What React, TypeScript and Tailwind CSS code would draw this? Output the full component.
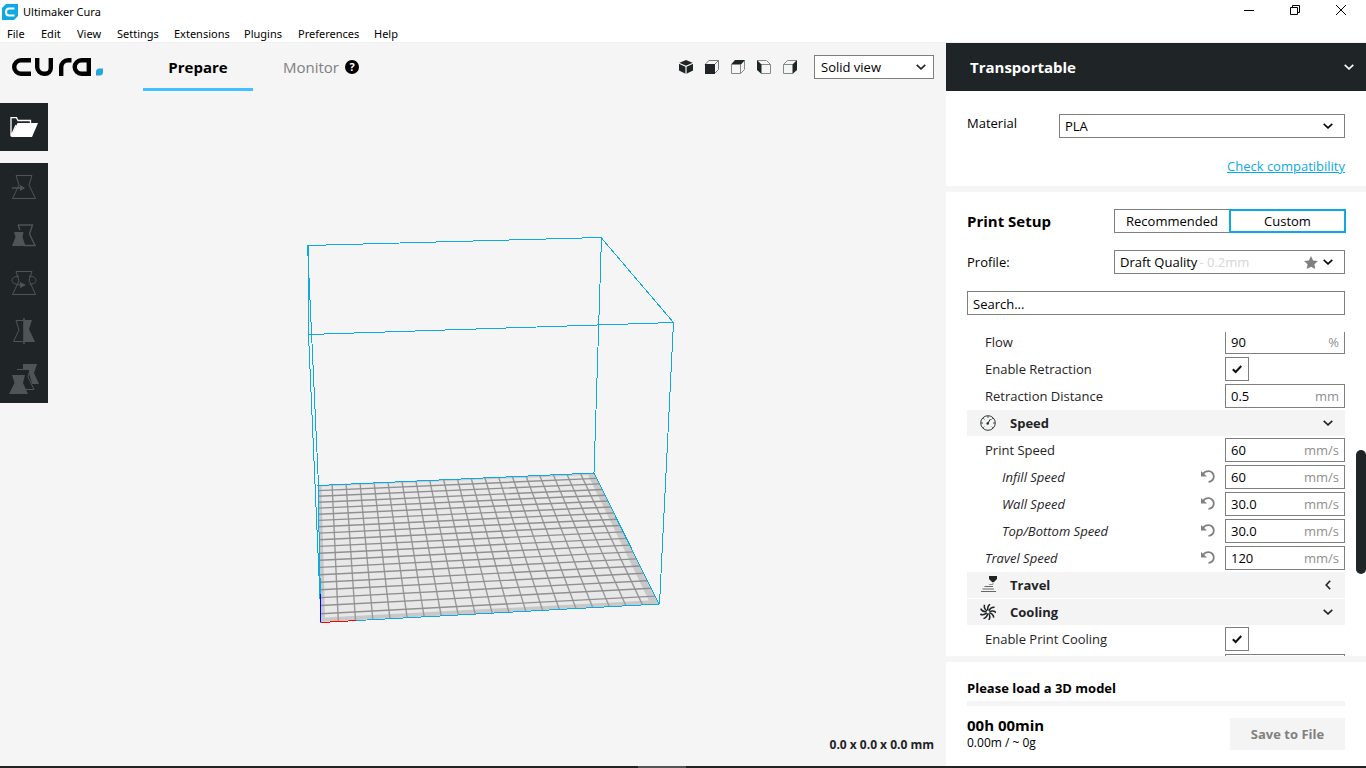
import React, { useState } from 'react';

const MENU = [
  { label: 'File', width: 'w-[34px]' },
  { label: 'Edit', width: 'w-[36px]' },
  { label: 'View', width: 'w-[40px]' },
  { label: 'Settings', width: 'w-[57px]' },
  { label: 'Extensions', width: 'w-[70px]' },
  { label: 'Plugins', width: 'w-[54px]' },
  { label: 'Preferences', width: 'w-[76px]' },
  { label: 'Help', width: 'w-[40px]' }
];

type Point = [number, number];

// Corners of the build plate: back left, back right, front right, front left
const PLATE: Point[] = [
  [318, 485],
  [594, 473],
  [659, 604],
  [321, 622]
];

// Projects (u, v) of the unit square onto the plate in perspective
const project = (u: number, v: number): Point => {
  const [[x0, y0], [x1, y1], [x2, y2], [x3, y3]] = PLATE;
  const dx1 = x1 - x2;
  const dx2 = x3 - x2;
  const dx3 = x0 - x1 + x2 - x3;
  const dy1 = y1 - y2;
  const dy2 = y3 - y2;
  const dy3 = y0 - y1 + y2 - y3;
  const det = dx1 * dy2 - dx2 * dy1;
  const g = (dx3 * dy2 - dx2 * dy3) / det;
  const h = (dx1 * dy3 - dx3 * dy1) / det;
  const w = g * u + h * v + 1;
  return [
    ((x1 - x0 + g * x1) * u + (x3 - x0 + h * x3) * v + x0) / w,
    ((y1 - y0 + g * y1) * u + (y3 - y0 + h * y3) * v + y0) / w
  ];
};

const segment = (a: Point, b: Point) =>
  `M${a[0].toFixed(1)} ${a[1].toFixed(1)}L${b[0].toFixed(1)} ${b[1].toFixed(1)}`;

const steps = Array.from({ length: 19 }, (_, i) => (i + 1) / 20);
const columns = steps.map((s) => segment(project(s, 0), project(s, 1))).join('');
const rows = steps.map((s) => segment(project(0, s), project(1, s))).join('');
const inner = [
  project(0.012, 0.015),
  project(0.975, 0.015),
  project(0.975, 0.975),
  project(0.012, 0.975)
]
  .map((p) => p.join(','))
  .join(' ');

const BuildVolume = () => (
  <svg
    width="380"
    height="400"
    viewBox="300 230 380 400"
    fill="none"
    aria-hidden="true"
  >
    <polygon points={PLATE.map((p) => p.join(',')).join(' ')} fill="#c8c8c8" />
    <polygon points={inner} fill="#e8e8e8" />
    <path d={columns} stroke="#999" strokeWidth="1.4" />
    <path d={rows} stroke="#909090" strokeWidth="1.4" />
    <g stroke="#0ca9e3" shapeRendering="crispEdges">
      <path d="M308 245.5L601 237.5L673.5 322.5L308.5 334.5Z" />
      <path d="M318 485.5L594 473L659 604L321 622.5Z" />
      <path d="M307.5 245L318.5 485M308.5 334L321 622M601.5 237L594 473M673.5 322L659.5 604" />
    </g>
    <path d="M320.5 594V622" stroke="#0000ff" shapeRendering="crispEdges" />
    <path d="M321 622.5L356 620.6" stroke="#ff0000" shapeRendering="crispEdges" />
  </svg>
);

const Chevron = ({ className = '' }: { className?: string }) => (
  <svg width="10" height="6" viewBox="0 0 10 6" fill="none" className={className} aria-hidden="true">
    <path d="M.7 .8L5 4.8L9.3 .8" stroke="currentColor" strokeWidth="1.6" />
  </svg>
);

const AppIcon = () => (
  <svg width="16" height="16" viewBox="0 0 16 16" aria-hidden="true">
    <path d="M4 0H16V12L12 16H0V4Z" fill="#0ca9e3" />
    <path d="M12.5 4.5H7Q4 4.5 4 8T7 11.5H12.5" fill="none" stroke="#fff" strokeWidth="2" />
  </svg>
);

const CuraLogo = () => (
  <svg width="92" height="20" viewBox="0 0 92 20" fill="none" role="img" aria-label="cura.">
    <g stroke="#000" strokeWidth="4.4">
      <path d="M19 3.2H9A6.8 6.8 0 0 0 9 16.8H19" />
      <path d="M25.2 1V10A6.8 6.8 0 0 0 32 16.8H33A5.8 5.8 0 0 0 38.8 11V1" />
      <path d="M49.2 19V10A6.8 6.8 0 0 1 56 3.2H59.5" />
      <path d="M76.8 19V3.2H69.5A6.8 6.8 0 0 0 69.5 16.8H76.8" />
    </g>
    <path d="M84 18.5V15Q84 11.5 87.5 11.5H91V15Q91 18.5 87.5 18.5Z" fill="#22a7e0" />
  </svg>
);

// Cube icons for the camera presets, each with its own visible face filled in
const VIEWS = [
  {
    label: '3D View',
    art: (
      <>
        <path d="M8 1L15 4V11.5L8 15L1 11.5V4Z" fill="#1f2427" />
        <path d="M1 4.3L8 7.3L15 4.3M8 7.3V15" stroke="#f4f4f4" strokeWidth="1.2" />
      </>
    )
  },
  {
    label: 'Front View',
    art: (
      <>
        <path d="M1 5.5L5 1.5H14.5V10.5L10.5 14.5M10.5 5.5L14.5 1.5" stroke="#777" />
        <path d="M1 5H11V15H1Z" fill="#1f2427" />
      </>
    )
  },
  {
    label: 'Top View',
    art: (
      <>
        <path d="M1.5 5.5V14.5H10.5V5.5M10.5 14.5L14.5 10.5V1.5" stroke="#888" />
        <path d="M1 5.5L5 1H15L11 5.5Z" fill="#1f2427" />
      </>
    )
  },
  {
    label: 'Left View',
    art: (
      <>
        <path d="M5.5 5.5H14.5V14.5H5.5M1.5 1.5H10.5L14.5 5.5" stroke="#888" />
        <path d="M1 1L5.5 5.5V15L1 11Z" fill="#1f2427" />
      </>
    )
  },
  {
    label: 'Right View',
    art: (
      <>
        <path d="M10.5 5.5H1.5V14.5H10.5M1.5 5.5L5.5 1.5H14.5" stroke="#888" />
        <path d="M10.5 5.5L15 1V11L10.5 15Z" fill="#1f2427" />
      </>
    )
  }
];

const TOOLS = [
  {
    label: 'Move',
    art: (
      <>
        <path d="M5 1.5H21L18 11L24.5 24.5H1.5L8 11Z" />
        <path d="M1 14H10" strokeWidth="1.5" />
        <path d="M9 11L14 14L9 17Z" fill="#4f5456" stroke="none" />
      </>
    )
  },
  {
    label: 'Scale',
    art: (
      <>
        <path d="M7 3H21.5L18.5 12L24 23.5H13M7 3L9 8" strokeWidth="1.4" />
        <path d="M3 10H12.5L11.5 15L14.5 24H1L4.5 15Z" fill="#4f5456" stroke="none" />
      </>
    )
  },
  {
    label: 'Rotate',
    art: (
      <>
        <path d="M5 1.5H21L18 10L24.5 24.5H1.5L8 11Z" />
        <path d="M8 6C3 6.5 1 8 1 10.5S3 14 9 15M18 6C23 6.5 25 8 25 10.5S22 14 18.5 14.5" />
        <path d="M9 12L15 15L9 18Z" fill="#4f5456" stroke="none" />
      </>
    )
  },
  {
    label: 'Mirror',
    art: (
      <>
        <path d="M12 2.5H5L8 12L2.5 23.5H12" />
        <path d="M13 2H21L18 11L24 24H13Z" fill="#4f5456" stroke="none" />
        <path d="M13 0V26" strokeWidth="1.6" />
      </>
    )
  },
  {
    label: 'Per Model Settings',
    art: (
      <>
        <path d="M12 -2H26L23 7L28 18H21L18 7L12 5Z" fill="#4f5456" stroke="none" />
        <path d="M6 3.5H19L17 11L23 23.5H14" fill="#1f2427" />
        <path d="M1 9H14L12 17L17 28H-2L3.5 17Z" fill="#4f5456" stroke="none" />
      </>
    )
  }
];

const SpeedIcon = () => (
  <svg width="16" height="16" viewBox="0 0 16 16" fill="none" stroke="#1f2427" aria-hidden="true">
    <circle cx="8" cy="8" r="7.3" strokeWidth="0.9" />
    <path
      d="M8 1V3M1 8H3M13 8H15M3.2 3.2L4.5 4.5M12.8 3.2L11.5 4.5M3.2 12.8L4.3 11.7M12.8 12.8L11.7 11.7"
      strokeWidth="0.8"
    />
    <path d="M10.5 4L8 8" />
    <circle cx="7.7" cy="8.5" r="1.2" fill="#1f2427" stroke="none" />
  </svg>
);

const TravelIcon = () => (
  <svg width="17" height="18" viewBox="0 0 17 18" fill="none" aria-hidden="true">
    <path d="M9 0H17V3L14 6H12L9 3Z" fill="#1f2427" />
    <path d="M13 6V8.5H9" stroke="#999" />
    <path d="M4.5 10.5H13M2.5 13H14M1 15.5H16" stroke="#666" />
  </svg>
);

const CoolingIcon = () => (
  <svg width="16" height="16" viewBox="0 0 16 16" fill="none" stroke="#1f2427" strokeWidth="1.5" aria-hidden="true">
    {[0, 40, 80, 120, 160, 200, 240, 280, 320].map((angle) => (
      <path key={angle} d="M8 6.5Q6.8 2.5 10 .2" transform={`rotate(${angle} 8 8)`} />
    ))}
  </svg>
);

const ResetIcon = () => (
  <svg width="14" height="13" viewBox="0 0 14 13" fill="none" aria-hidden="true">
    <path d="M2 4Q4 1.2 7.5 1.2A5.2 5.2 0 0 1 7.5 11.8" stroke="#808080" strokeWidth="1.8" />
    <path d="M0 1V6.5H6Z" fill="#808080" />
  </svg>
);

type Row =
  | { kind: 'value'; label: string; value: string; unit: string; child?: boolean; changed?: boolean }
  | { kind: 'check'; label: string }
  | { kind: 'category'; label: string; icon: React.ReactNode; open: boolean };

const SETTINGS: Row[] = [
  { kind: 'value', label: 'Flow', value: '90', unit: '%' },
  { kind: 'check', label: 'Enable Retraction' },
  { kind: 'value', label: 'Retraction Distance', value: '0.5', unit: 'mm' },
  { kind: 'category', label: 'Speed', icon: <SpeedIcon />, open: true },
  { kind: 'value', label: 'Print Speed', value: '60', unit: 'mm/s' },
  { kind: 'value', label: 'Infill Speed', value: '60', unit: 'mm/s', child: true, changed: true },
  { kind: 'value', label: 'Wall Speed', value: '30.0', unit: 'mm/s', child: true, changed: true },
  { kind: 'value', label: 'Top/Bottom Speed', value: '30.0', unit: 'mm/s', child: true, changed: true },
  { kind: 'value', label: 'Travel Speed', value: '120', unit: 'mm/s', changed: true },
  { kind: 'category', label: 'Travel', icon: <TravelIcon />, open: false },
  { kind: 'category', label: 'Cooling', icon: <CoolingIcon />, open: true },
  { kind: 'check', label: 'Enable Print Cooling' },
  { kind: 'value', label: '', value: '', unit: '' }
];

const SettingRow = ({ row, id }: { row: Row; id: string }) => {
  if (row.kind === 'category') {
    return (
      <button
        aria-expanded={row.open}
        className="mt-px flex h-[26px] w-full shrink-0 items-center bg-[#f4f4f4] px-3 text-left font-bold"
      >
        <span className="flex w-[31px] items-center pl-px">{row.icon}</span>
        <span className="flex-1">{row.label}</span>
        <Chevron className={row.open ? '' : 'rotate-90'} />
      </button>
    );
  }

  if (row.kind === 'check') {
    return (
      <div className="flex h-[27px] shrink-0 items-center justify-between pl-[18px]">
        <label htmlFor={id}>{row.label}</label>
        <span className="relative mr-24 flex size-6">
          <input
            id={id}
            type="checkbox"
            defaultChecked
            className="peer size-6 appearance-none border border-[#7f7f7f] bg-white"
          />
          <svg
            width="10"
            height="9"
            viewBox="0 0 10 9"
            fill="none"
            className="pointer-events-none absolute top-2 left-[7px] hidden peer-checked:block"
            aria-hidden="true"
          >
            <path d="M.8 4.3L3.6 7L9.3 1" stroke="#111" strokeWidth="2" />
          </svg>
        </span>
      </div>
    );
  }

  return (
    <div className={`flex h-[27px] shrink-0 items-center ${row.child ? 'pl-[35px]' : 'pl-[18px]'}`}>
      <label htmlFor={id} className={`flex-1 ${row.changed ? 'italic' : ''}`}>
        {row.label}
      </label>
      {row.changed && (
        <button aria-label={`Reset ${row.label}`} className="mr-2.5">
          <ResetIcon />
        </button>
      )}
      <div className="flex h-6 w-[120px] items-center border border-[#7f7f7f] bg-white px-[5px]">
        <input
          id={id}
          aria-label={row.label || 'Fan Speed'}
          defaultValue={row.value}
          className="w-full min-w-0 flex-1 bg-transparent text-black outline-none"
        />
        <span className="text-[#8f8f8f]">{row.unit}</span>
      </div>
    </div>
  );
};

const TitleBar = () => (
  <header className="bg-white font-['Noto_Sans','Open_Sans',sans-serif] text-[11px] text-black">
    <div className="flex h-6 justify-between pl-0.5">
      <div className="flex items-center gap-[5px]">
        <AppIcon />
        <span>Ultimaker Cura</span>
      </div>
      <div className="flex pr-0.5">
        <button aria-label="Minimize" className="flex h-5 w-[46px] items-center justify-center">
          <svg width="10" height="10" fill="none" stroke="#000"><path d="M0 5.5H10" /></svg>
        </button>
        <button aria-label="Restore" className="flex h-5 w-[46px] items-center justify-center">
          <svg width="10" height="10" fill="none" stroke="#000"><path d="M.5 2.5H7.5V9.5H.5ZM2.5 2.5V.5H9.5V7.5H7.5" /></svg>
        </button>
        <button aria-label="Close" className="flex h-5 w-[46px] items-center justify-center">
          <svg width="10" height="10" fill="none" stroke="#000"><path d="M0 0L10 10M10 0L0 10" /></svg>
        </button>
      </div>
    </div>
    <nav className="flex h-[19px] items-center border-b border-[#f0f0f0] pt-0.5 pl-[7px]">
      {MENU.map((item) => (
        <button key={item.label} className={`shrink-0 text-left whitespace-nowrap ${item.width}`}>
          {item.label}
        </button>
      ))}
    </nav>
  </header>
);

const Viewport = () => (
  <main className="relative flex min-w-0 flex-1 flex-col">
    <div className="flex h-12 items-center pl-3">
      <CuraLogo />
      <nav className="ml-[39px] flex h-12 text-[15px]">
        <button className="w-[110px] border-b-[3px] border-[#43c0ff] pt-0.5 font-bold text-black">
          Prepare
        </button>
        <button className="ml-[30px] flex items-center gap-1.5 text-[#808080]">
          Monitor
          <span className="flex size-3.5 items-center justify-center rounded-full bg-black text-[11px] font-bold text-white">
            ?
          </span>
        </button>
      </nav>
      <div className="ml-auto flex items-center gap-2.5 pr-3">
        {VIEWS.map((view) => (
          <button key={view.label} aria-label={view.label}>
            <svg width="16" height="16" viewBox="0 0 16 16" fill="none">{view.art}</svg>
          </button>
        ))}
        <div className="relative ml-1.5">
          <select
            aria-label="View mode"
            className="h-6 w-[120px] appearance-none border border-[#7f7f7f] bg-white pl-1.5 text-[13px] text-black"
          >
            <option>Solid view</option>
            <option>Layer view</option>
          </select>
          <Chevron className="pointer-events-none absolute top-[9px] right-2" />
        </div>
      </div>
    </div>

    <div className="mt-3 flex w-12 flex-col gap-3">
      <button aria-label="Open File" className="flex size-12 items-center justify-center bg-[#1f2427]">
        <svg width="28" height="20" viewBox="0 0 28 20" fill="none">
          <path d="M20.5 6V3.5H8L6.5 .7H1V19.3L6 8" stroke="#fff" strokeWidth="1.3" />
          <path d="M7.5 6H28L22 20H1Z" fill="#fff" />
        </svg>
      </button>
      <div className="flex flex-col bg-[#1f2427]">
        {TOOLS.map((tool) => (
          <button key={tool.label} aria-label={tool.label} className="flex size-12 items-center justify-center">
            <svg
              width="26"
              height="26"
              viewBox="0 0 26 26"
              fill="none"
              stroke="#4f5456"
              className="overflow-visible"
            >
              {tool.art}
            </svg>
          </button>
        ))}
      </div>
    </div>

    {/* The build volume floats on the free canvas */}
    <div className="absolute top-[187px] left-[300px]">
      <BuildVolume />
    </div>

    <p className="mt-auto pr-3 pb-3 text-right text-xs leading-[18px] font-bold">
      0.0 x 0.0 x 0.0 mm
    </p>
  </main>
);

const App = () => {
  const [mode, setMode] = useState<'recommended' | 'custom'>('custom');

  const modeClass = (active: boolean) =>
    active ? 'border-2 border-[#0ca9e3]' : 'border border-r-0 border-[#7f7f7f]';

  return (
    <div className="flex h-screen flex-col overflow-hidden bg-[#f5f5f5] font-['Open_Sans',sans-serif] text-[13px] leading-[18px] text-[#1f2427]">
      <TitleBar />

      <div className="flex min-h-0 flex-1">
        <Viewport />

        <aside className="flex w-[420px] shrink-0 flex-col">
          <button className="flex h-12 shrink-0 items-center justify-between bg-[#1f2427] pr-3 pl-6 text-[15px] font-bold text-white">
            Transportable
            <Chevron />
          </button>

          <section className="flex h-[95px] shrink-0 flex-col bg-white px-[21px] pt-[23px] text-black">
            <div className="flex justify-between">
              <label htmlFor="material">Material</label>
              <div className="relative">
                <select
                  id="material"
                  className="block h-6 w-[286px] appearance-none border border-[#7f7f7f] bg-white pl-[5px]"
                >
                  <option>PLA</option>
                  <option>ABS</option>
                </select>
                <Chevron className="pointer-events-none absolute top-[9px] right-3" />
              </div>
            </div>
            <a href="#compatibility" className="mt-[19px] self-end text-[#0ca9e3] underline">
              Check compatibility
            </a>
          </section>

          <section className="mt-1.5 flex min-h-0 flex-1 flex-col bg-white pt-[17px]">
            <div className="flex items-center justify-between pr-5 pl-[21px]">
              <h2 className="text-[15px] font-bold text-black">Print Setup</h2>
              <div className="flex h-6 text-black">
                <button
                  className={`w-[115px] ${modeClass(mode === 'recommended')}`}
                  onClick={() => setMode('recommended')}
                >
                  Recommended
                </button>
                <button
                  className={`w-[117px] ${modeClass(mode === 'custom')}`}
                  onClick={() => setMode('custom')}
                >
                  Custom
                </button>
              </div>
            </div>

            <div className="mt-[17px] flex items-center justify-between px-[21px] text-black">
              <span>Profile:</span>
              <button className="flex h-6 w-[231px] items-center border border-[#7f7f7f] pr-[11px] pl-[5px]">
                Draft Quality
                <span className="ml-0.5 flex-1 text-left text-[#d6d6d6]">- 0.2mm</span>
                <svg width="14" height="13" viewBox="0 0 14 13" className="mr-[5px]" aria-hidden="true">
                  <path d="M7 0L9.1 4.4L14 5L10.4 8.3L11.3 13L7 10.7L2.7 13L3.6 8.3L0 5L4.9 4.4Z" fill="#7f7f7f" />
                </svg>
                <Chevron />
              </button>
            </div>

            <input
              type="search"
              aria-label="Search settings"
              placeholder="Search..."
              className="mx-[21px] mt-[17px] h-6 shrink-0 border border-[#7f7f7f] px-[5px] pt-0.5 placeholder:text-black"
            />

            <div className="mt-[17px] flex min-h-0 flex-1 pl-[21px]">
              <div className="flex min-w-0 flex-1 flex-col justify-end overflow-hidden">
                <div className="-mb-[23px] flex flex-col">
                  {SETTINGS.map((row, i) => (
                    <SettingRow key={i} row={row} id={`setting-${i}`} />
                  ))}
                </div>
              </div>
              <div className="flex w-[21px] justify-end">
                <div className="mt-[118px] h-[124px] w-2.5 rounded-full bg-[#1f2427]" />
              </div>
            </div>
          </section>

          <section className="mt-1.5 shrink-0 bg-white px-[21px] pt-[17px] pb-3.5 text-black">
            <p className="font-bold">Please load a 3D model</p>
            <div className="mt-1 h-[5px] bg-[#f4f4f4]" />
            <div className="mt-2.5 flex items-center justify-between">
              <div>
                <p className="text-[15px] font-bold">00h 00min</p>
                <p className="text-xs leading-[18px]">0.00m / ~ 0g</p>
              </div>
              <button className="h-8 w-[115px] bg-[#f4f4f4] font-bold text-[#808080]" disabled>
                Save to File
              </button>
            </div>
          </section>
        </aside>
      </div>

      {/* Taskbar edge */}
      <div className="h-0.5 shrink-0 bg-[#252122] pl-[638px]">
        <div className="h-0.5 w-12 bg-[#555]" />
      </div>
    </div>
  );
};

export default App;
